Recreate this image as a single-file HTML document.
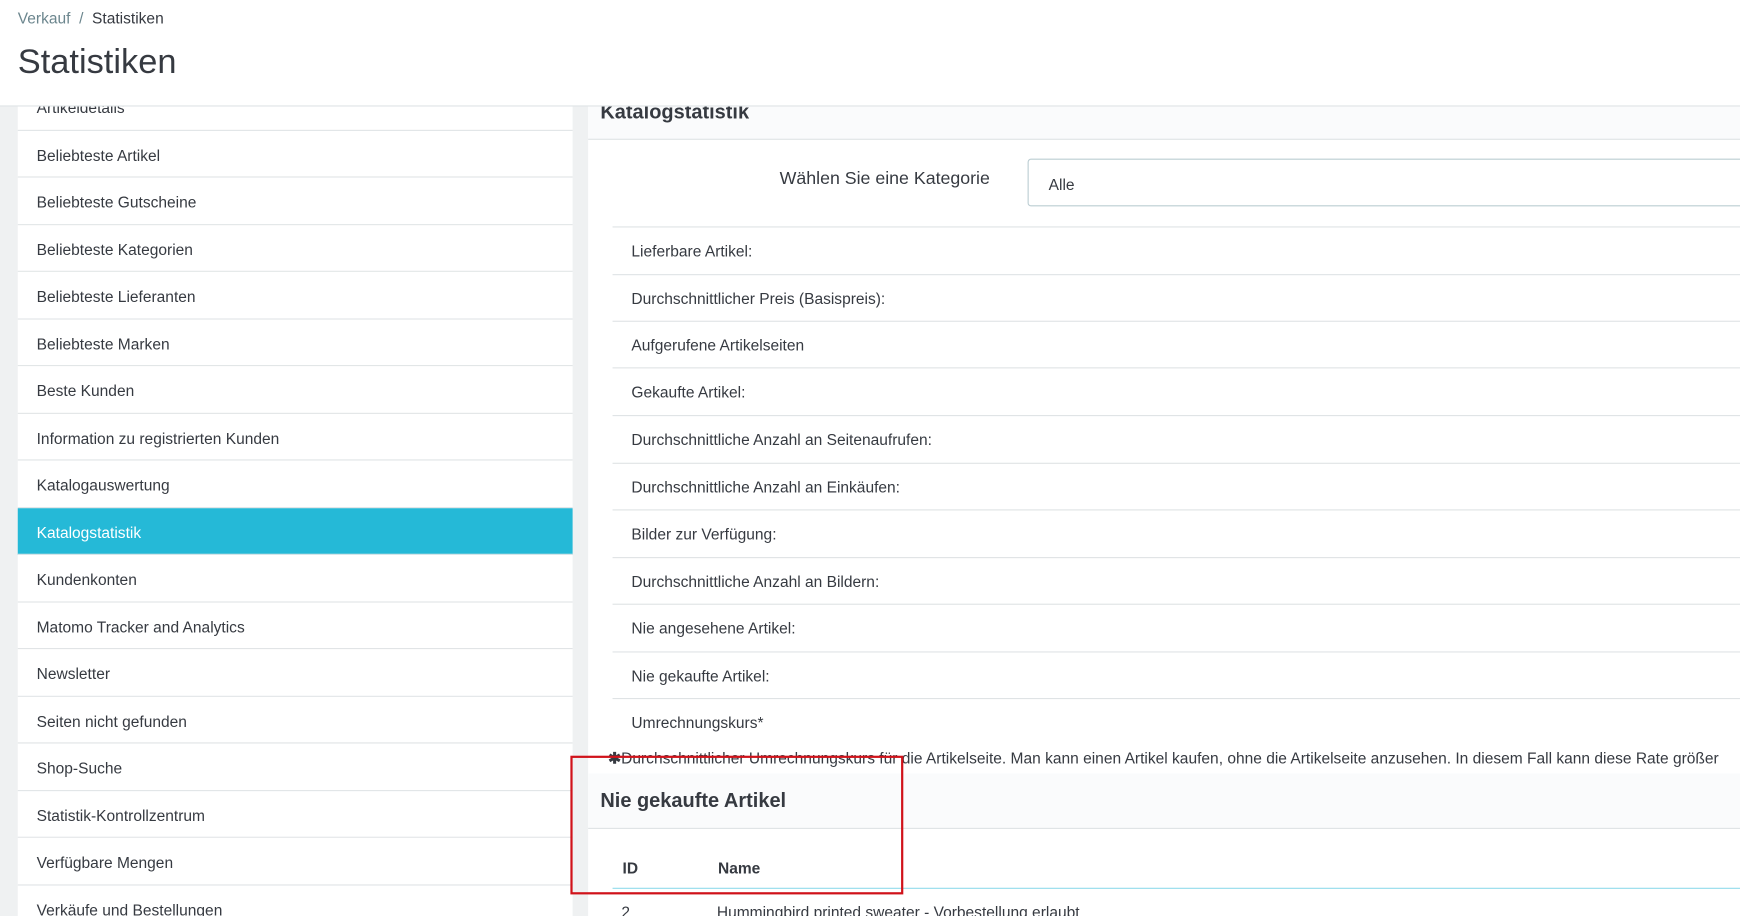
<!DOCTYPE html>
<html><head><meta charset="utf-8"><style>
html,body{margin:0;padding:0;width:1740px;height:916px;overflow:hidden;background:#eff1f2}
#w{width:1568px;height:826px;transform:scale(1.1097);transform-origin:0 0;position:relative;font-family:"Liberation Sans",sans-serif;color:#363a41;overflow:hidden}
.hdr{position:absolute;left:0;top:0;width:1568px;height:95px;background:#fff;border-bottom:1px solid #dfe3e5}
.bc{position:absolute;left:16px;top:8px;font-size:14px;color:#6c868e}
.bc b{font-weight:normal;color:#363a41}
.ttl{position:absolute;left:16px;top:38px;font-size:31px;color:#363a41}
.side{position:absolute;left:16px;top:75px;width:500px}
.it{height:41.5px;line-height:45px;border-bottom:1px solid #dfe3e5;background:#fff;padding-left:17px;font-size:14px;color:#363a41}
.it.a{background:#25b9d7;color:#fff}
.p1{position:absolute;left:530px;top:80px;width:1100px;height:620px;background:#fff}
.ph{position:absolute;left:0;top:0;right:0;height:45px;background:#fafbfc;border-bottom:1px solid #dfe3e5}
.ph span{position:absolute;left:11px;top:11px;font-size:18px;font-weight:bold}
.lbl{position:absolute;left:0;width:362px;text-align:right;top:73px;font-size:16px}
.sel{position:absolute;left:396px;top:63px;width:700px;height:43px;border:1px solid #bbcdd2;border-radius:3px;font-size:14px;line-height:44px;padding-left:18px;box-sizing:border-box}
.row{position:absolute;left:22px;width:1100px;border-top:1px solid #dfe3e5;height:42px;font-size:14px;line-height:43px;padding-left:17px}
.fn{position:absolute;left:548px;top:675px;font-size:14px;white-space:nowrap;z-index:2}
.p2{position:absolute;left:530px;top:697px;width:1100px;height:200px;background:#fff}
.th{position:absolute;top:774px;font-size:14px;font-weight:bold}
.red{position:absolute;left:514px;top:681px;width:296px;height:121px;border:2px solid #d0121a;z-index:3}
</style></head><body><div id="w">
<div class="side">
<div class="it" style="height:41.5px;line-height:44px">Artikeldetails</div>
<div class="it">Beliebteste Artikel</div>
<div class="it">Beliebteste Gutscheine</div>
<div class="it">Beliebteste Kategorien</div>
<div class="it">Beliebteste Lieferanten</div>
<div class="it">Beliebteste Marken</div>
<div class="it">Beste Kunden</div>
<div class="it">Information zu registrierten Kunden</div>
<div class="it">Katalogauswertung</div>
<div class="it a">Katalogstatistik</div>
<div class="it">Kundenkonten</div>
<div class="it">Matomo Tracker and Analytics</div>
<div class="it">Newsletter</div>
<div class="it">Seiten nicht gefunden</div>
<div class="it">Shop-Suche</div>
<div class="it">Statistik-Kontrollzentrum</div>
<div class="it">Verfügbare Mengen</div>
<div class="it">Verkäufe und Bestellungen</div>
</div>
<div class="p1">
<div class="ph"><span>Katalogstatistik</span></div>
<div class="lbl">Wählen Sie eine Kategorie</div>
<div class="sel">Alle</div>
<div class="row" style="top:124px">Lieferbare Artikel:</div>
<div class="row" style="top:167px">Durchschnittlicher Preis (Basispreis):</div>
<div class="row" style="top:209px">Aufgerufene Artikelseiten</div>
<div class="row" style="top:251px">Gekaufte Artikel:</div>
<div class="row" style="top:294px">Durchschnittliche Anzahl an Seitenaufrufen:</div>
<div class="row" style="top:337px">Durchschnittliche Anzahl an Einkäufen:</div>
<div class="row" style="top:379px">Bilder zur Verfügung:</div>
<div class="row" style="top:422px">Durchschnittliche Anzahl an Bildern:</div>
<div class="row" style="top:464px">Nie angesehene Artikel:</div>
<div class="row" style="top:507px">Nie gekaufte Artikel:</div>
<div class="row" style="top:549px">Umrechnungskurs*</div>
</div>
<div class="p2">
<div class="ph" style="height:49px"><span style="top:14px">Nie gekaufte Artikel</span></div>
<div style="position:absolute;left:22px;top:103px;width:1100px;border-top:1px solid #25b9d7;opacity:.5"></div>
<div style="position:absolute;left:30px;top:117px;font-size:14px">2</div>
<div style="position:absolute;left:116px;top:117px;font-size:14px">Hummingbird printed sweater - Vorbestellung erlaubt</div>
</div>
<div class="fn"><b>✱</b>Durchschnittlicher Umrechnungskurs für die Artikelseite. Man kann einen Artikel kaufen, ohne die Artikelseite anzusehen. In diesem Fall kann diese Rate größer</div>
<div class="th" style="left:561px">ID</div>
<div class="th" style="left:647px">Name</div>
<div class="red"></div>
<div class="hdr"><div class="bc">Verkauf &nbsp;/&nbsp; <b>Statistiken</b></div><div class="ttl">Statistiken</div></div>
</div></body></html>
